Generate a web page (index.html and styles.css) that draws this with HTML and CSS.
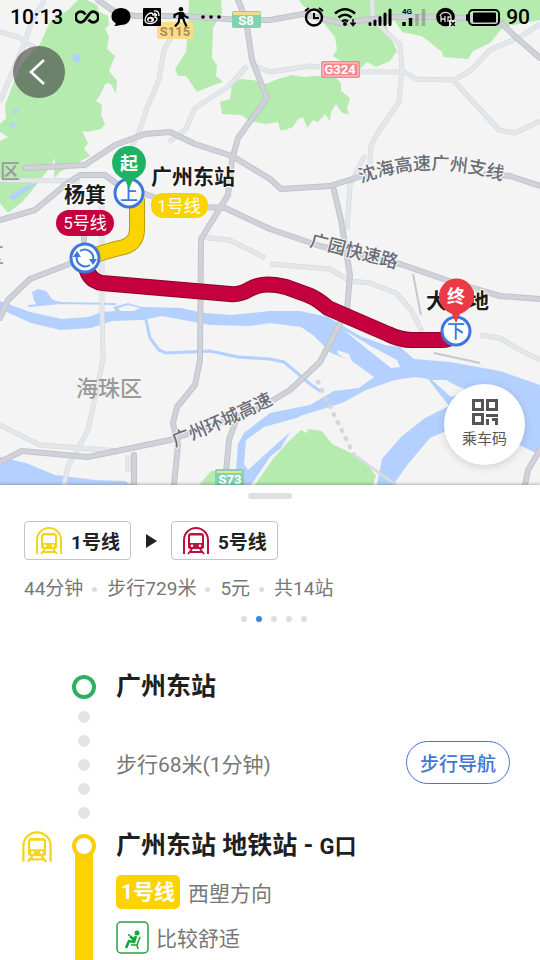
FILE: index.html
```html
<!DOCTYPE html>
<html lang="zh-CN">
<head>
<meta charset="utf-8">
<meta name="viewport" content="width=device-width, initial-scale=1">
<title>公交路线详情</title>
<link rel="stylesheet" href="styles.css">
</head>
<body>
<svg class="defs" width="0" height="0" aria-hidden="true">
  <symbol id="metro" viewBox="0 0 30 30">
    <path d="M3 28V14a12 12 0 0 1 24 0v14" fill="none" stroke="currentColor" stroke-width="2"/>
    <path fill="currentColor" fill-rule="evenodd" d="M10 7h10a3 3 0 0 1 3 3V21a2 2 0 0 1-2 2H9a2 2 0 0 1-2-2V10a3 3 0 0 1 3-3zM9 10.500V17h12v-6.500a1 1 0 0 0-1-1H10a1 1 0 0 0-1 1zM11 18.500a1.300 1.300 0 1 0 0 2.600 1.300 1.300 0 0 0 0-2.600zM19 18.500a1.300 1.300 0 1 0 0 2.600 1.300 1.300 0 0 0 0-2.600z"/>
    <path d="M11 23l-4 5M19 23l4 5M9 26h12" fill="none" stroke="currentColor" stroke-width="2"/>
  </symbol>
</svg>

<main class="page">
  <section class="map" aria-label="路线地图">
    <svg class="map-canvas" viewBox="0 0 540 485">
      <rect width="540" height="485" fill="#f4f4f5"/>
      <g fill="#b5ebaf">
        <path d="M78 0H87L97 5 99 12 108 16 109 25 105 29 109 37 107 49 115 56 109 71 117 81 116 94 111 84 106 83 100 95 96 101 102 105 101 115 105 124 101 129 87 132 82 131 88 143 84 149 90 156 72 166 60 172 54 178 55 158 48 170 29 194 22 202 8 213 0 203V141L8 137 0 132V124L6 118 5 105 20 66 40 44 50 22 68 10Z"/>
        <path d="M189 0H221L222 13 213 28 212 58 217 65 216 76 223 82 211 86 197 92 186 76 178 76 175 69 186 52 188 28Z"/>
        <path d="M232 84 241 79 253 80 266 84 278 79 292 75 304 77 315 76 335 77 341 83 341 91 350 98 347 109 349 114 342 113 336 104 331 112 330 121 325 114 318 122 313 120 307 128 303 117 298 119 293 127 285 130 280 130 278 122 266 124 250 121 241 115 222 114 220 102 230 99Z"/>
        <path d="M299 0H540V20L503 27 490 43 473 51 468 59 443 57 442 52 427 40 421 36 402 32 394 20 386 25 391 38 397 51 390 61 376 67 367 62 360 69 346 64 333 56 337 50 335 37 326 26 315 9 304 7Z"/>
        <path d="M199 485 211 471 228 470 236 480 241 485ZM255 485 272 460 288 442 301 430 306 433 308 429 322 431 332 444 349 452 367 464 376 476 373 485Z"/>
      </g>
      <g fill="#b4d0ff">
        <path d="M72 55l8-2v8l-6 2zM11 112l8-5-3 7zM10 122l9 4-8 1zM8 197l16-10 14-4-14 10-10 7zM32 292l6-3 8 2 7 9 12 3-27 3-4-5z"/>
        <path d="M0 301 30 312 62 319 88 317 102 312 116 311 113 307 128 303 142 307 181 308 204 313 231 315 270 311 300 311 328 317 360 336 385 345 400 347 414 359 450 362 500 371 540 385V455L505 438 462 424 430 438 408 464 393 485H377L382 459 401 437 425 418 449 406 446 402 428 379 415 377 395 380 366 390 342 403 300 416 293 427 281 448 270 457 251 485H243L236 470 238 444 244 433 270 413 310 405 334 391 359 388 374 377 352 361 331 353 313 335 301 327 270 323 250 326 210 325 162 316 142 320 112 321 91 328 60 330 31 323 0 309Z"/>
        <path d="M0 457 26 463 55 475 95 480 125 481 132 485H0Z"/>
        <path fill="#f4f4f5" d="M344 330 362 345 391 368 400 367 397 360 369 345ZM432 380 446 380 457 386 470 391 451 397ZM337 350 349 354 352 362 338 354ZM246 440 264 427 300 417 290 432 270 450 248 470 244 464ZM118 308 128 305 140 308 134 311 120 311Z"/>
      </g>
      <g fill="none" stroke="#b4d0ff" stroke-linecap="round">
        <path d="M29 306 60 303 115 304" stroke-width="2"/>
        <path d="M146 320 150 338 159 350 166 353 210 351 238 357 270 359 284 362 296 372 310 384 320 391" stroke-width="3"/>
      </g>
      <g fill="none" stroke="#d3d7db" stroke-width="5" stroke-linejoin="round">
        <path d="M45 0 32 20 24 45 14 68 0 102M0 32 18 37 35 48M175 30 164 50 159 80 147 108 138 135 130 150M247 66 229 86 195 108 186 129 169 142M252 65 270 72M270 72 310 66 320 67M345 72 380 72 405 72 416 79 454 80 470 71 490 50 520 37 540 24M372 0 373 18 386 32 400 45 402 70 399 102 379 131 371 145 370 164M455 82 499 130 515 133 540 121M102 195V310L103 360 88 430 68 466 64 485M0 425 40 445 120 451M0 180 80 181M200 237 229 240 250 250 265 258M128 455V472M480 335 500 338 520 350 540 360M270 264 330 269 350 281 370 283 396 293 411 310 422 331M365 155 350 185 347 230"/>
      </g>
      <g fill="none" stroke="#e3e7e9" stroke-width="4" stroke-linejoin="round">
        <path d="M45 0 32 20 24 45 14 68 0 102M0 32 18 37 35 48M175 30 164 50 159 80 147 108 138 135 130 150M247 66 229 86 195 108 186 129 169 142M252 65 270 72M270 72 310 66 320 67M345 72 380 72 405 72 416 79 454 80 470 71 490 50 520 37 540 24M372 0 373 18 386 32 400 45 402 70 399 102 379 131 371 145 370 164M455 82 499 130 515 133 540 121M102 195V310L103 360 88 430 68 466 64 485M0 425 40 445 120 451M0 180 80 181M200 237 229 240 250 250 265 258M128 455V472M480 335 500 338 520 350 540 360M270 264 330 269 350 281 370 283 396 293 411 310 422 331M365 155 350 185 347 230"/>
      </g>
      <g fill="none" stroke="#c2c4cb" stroke-width="6" stroke-linejoin="round" stroke-linecap="round">
        <path d="M98 0 115 12 135 16 185 16 240 20 270 20 303 14 340 23 390 17 450 17 500 22 518 39 540 58M238 0 246 20 252 60 267 98 238 138 232 160 228 195 201 239 200 360 195 385 177 407 173 423 178 445 174 485M25 168 85 165 115 145 145 134 170 132 195 144 232 156 270 179 281 189 330 186 365 175M0 220 35 210 65 185 80 175 105 175 125 190 145 194 180 206 225 208 270 229 320 246 400 264 455 283 500 296 540 299M334 190 341 220 350 275 347 310 320 362 290 390 255 411 170 440 88 457 22 451 0 462M486 174 510 176 540 186M84 215V240M85 258 30 279 8 300 0 318M134 455V485M236 420 229 440 226 472M540 450 528 470 525 485"/>
      </g>
      <g fill="none" stroke="#d0d1d9" stroke-width="4" stroke-linejoin="round" stroke-linecap="round">
        <path d="M98 0 115 12 135 16 185 16 240 20 270 20 303 14 340 23 390 17 450 17 500 22 518 39 540 58M238 0 246 20 252 60 267 98 238 138 232 160 228 195 201 239 200 360 195 385 177 407 173 423 178 445 174 485M25 168 85 165 115 145 145 134 170 132 195 144 232 156 270 179 281 189 330 186 365 175M0 220 35 210 65 185 80 175 105 175 125 190 145 194 180 206 225 208 270 229 320 246 400 264 455 283 500 296 540 299M334 190 341 220 350 275 347 310 320 362 290 390 255 411 170 440 88 457 22 451 0 462M486 174 510 176 540 186M84 215V240M85 258 30 279 8 300 0 318M134 455V485M236 420 229 440 226 472M540 450 528 470 525 485"/>
      </g>
      <path d="M317 380 354 455" fill="none" stroke="#d4d7da" stroke-width="4" stroke-dasharray="5 4"/>
      <path d="M354 455 396 485" fill="none" stroke="#d9dcde" stroke-width="3"/>
      <path d="M413 274 421 315M434 353 480 363" fill="none" stroke="#c6c8cf" stroke-width="2"/>

      <g class="shield">
        <rect x="157" y="22" width="36" height="17" rx="2" fill="#fbdc8b"/><text x="175" y="36" fill="#a98c50">S115</text>
        <rect x="232" y="11" width="29" height="17" rx="2" fill="#7fd3b1"/><path d="M233 12h27v3h-27z" fill="#f2dc8c"/><text x="246" y="25" fill="#fff">S8</text>
        <rect x="321" y="61" width="39" height="17" rx="2" fill="#f5868c"/><rect x="323" y="63" width="35" height="13" rx="1" fill="none" stroke="#ffd5d7"/><text x="340" y="74" fill="#fff">G324</text>
        <rect x="215" y="469" width="29" height="18" rx="2" fill="#7fd3b1"/><path d="M217 471h25v2h-25z" fill="#f2dc8c"/><text x="230" y="484" fill="#fff">S73</text>
      </g>

      <defs>
        <path id="road-north" d="M361 183Q425 158 500 180"/>
        <path id="road-garden" d="M309 246 402 270"/>
        <path id="road-ring" d="M175 447Q220 430 275 403"/>
      </defs>
      <g class="road-name">
        <text><textPath href="#road-north">沈海高速广州支线</textPath></text>
        <text><textPath href="#road-garden">广园快速路</textPath></text>
        <text><textPath href="#road-ring">广州环城高速</textPath></text>
      </g>
      <g class="district"><text x="76" y="396">海珠区</text><text class="small" x="0" y="179">区</text><text class="small" x="-16" y="263">区</text></g>

      <g fill="none" stroke-linejoin="round">
        <path d="M137 198V229Q137 243 124 247 110 250 86 258" stroke="#b99b14" stroke-width="16"/>
        <path d="M137 198V229Q137 243 124 247 110 250 86 258" stroke="#fbd400" stroke-width="14"/>
        <path d="M85 260Q86 280 102 283L230 294Q240 295 250 289 264 281 286 287L308 295Q318 299 328 308L388 334Q400 340 412 340H440Q450 340 456 335" stroke="#8d002c" stroke-width="16"/>
        <path d="M85 260Q86 280 102 283L230 294Q240 295 250 289 264 281 286 287L308 295Q318 299 328 308L388 334Q400 340 412 340H440Q450 340 456 335" stroke="#c4003f" stroke-width="14"/>
      </g>
      <rect x="151" y="193" width="57" height="25" rx="12" fill="#fbd400"/>
      <rect x="56" y="210" width="58" height="26" rx="13" fill="#c4003f"/>
      <g class="line-tag"><text x="179" y="212">1号线</text><text x="85" y="229">5号线</text></g>
      <g class="station-name"><text x="151" y="184">广州东站</text><text x="64" y="202">杨箕</text><text x="426" y="308">大</text><text x="468" y="308">地</text></g>
      <g fill="#fff" stroke="#3d78df" stroke-width="3">
        <circle cx="129" cy="193" r="14"/><circle cx="85" cy="258" r="14"/><circle cx="456" cy="331" r="14"/>
      </g>
      <g class="stop-mark"><text x="129" y="200">上</text><text x="456" y="338">下</text></g>
      <path d="M80 251A8.500 8.500 0 0 1 93 260M90 265A8.500 8.500 0 0 1 77 256" fill="none" stroke="#3d78df" stroke-width="2"/>
      <path d="M89 259h8l-4 6zM81 257h-8l4-6z" fill="#3d78df"/>
      <path d="M129 189L125 180Q112 174 112 163A17 17 0 0 1 146 163Q146 174 133 180Z" fill="#1eb263"/>
      <path d="M456 323L452 314Q439 308 439 296A17.500 17.500 0 0 1 474 296Q474 308 460 314Z" fill="#e93a45"/>
      <g class="pin-mark"><text x="129" y="170">起</text><text x="456" y="303">终</text></g>
    </svg>

    <div class="status">
      <div class="status-group">
        <span class="clock">10:13</span>
        <svg width="24" height="20" viewBox="0 0 24 20"><path d="M10.500 7.500C9 5.500 7.500 4.700 6 4.700a5 5 0 0 0 0 10.600c2.500 0 4-2 6-5s3.500-5.600 6-5.600a5 5 0 0 1 0 10.600c-1.700 0-3-.8-4.500-2.600" fill="none" stroke="#000" stroke-width="2.800"/></svg>
        <svg width="20" height="20" viewBox="0 0 20 20"><path d="M10 1c5.500 0 9.500 3.500 9.500 8.500S15.500 18 10 18q-4 1-7 1 2-1 1.500-3Q.5 14 .5 9.500C.5 4.500 4.500 1 10 1z"/></svg>
        <svg width="18" height="20" viewBox="0 0 18 20"><rect y="1" width="18" height="18" rx="1"/><path d="M8 6C5 6 2 10 2 13c0 2 2 3.500 5.500 3.500S14 14 14 12q0-1.500-2-2 1-3-2-2Q10 6 8 6zM11 4q5-1 5 5M11 6.500q3 0 2.500 2.500" fill="none" stroke="#fff" stroke-width="1.300"/><ellipse cx="7.500" cy="12.500" rx="3.500" ry="2.700" fill="#fff"/><circle cx="7" cy="13" r="1.500"/></svg>
        <svg width="16" height="20" viewBox="0 0 16 20"><circle cx="8" cy="2.300" r="2.300"/><path d="M5.500 5h5l.5 7h-5.500z"/><path d="M1.500 11V8L6 6M10 6l1.500 3 4 2M10 11l1.500 4 2 4.500M6.500 11L5.500 15.500 2 19.500" fill="none" stroke="#000" stroke-width="2.200"/></svg>
        <svg width="20" height="20" viewBox="0 0 20 20"><circle cx="2" cy="10" r="1.800"/><circle cx="10" cy="10" r="1.800"/><circle cx="18" cy="10" r="1.800"/></svg>
      </div>
      <div class="status-group right">
        <svg width="20" height="20" viewBox="0 0 20 20"><circle cx="10" cy="10.500" r="8" fill="none" stroke="#000" stroke-width="2.400"/><path d="M10 6v5h5M1 4l4-3M15 1l4 3" fill="none" stroke="#000" stroke-width="2"/></svg>
        <svg width="24" height="20" viewBox="0 0 24 20"><path d="M1 6.500Q11 -2 21 6.500M4.500 10.500Q11 5 17.500 10.500M8 14.500Q11 12 14 14.500" fill="none" stroke="#000" stroke-width="2.600"/><circle cx="11" cy="17" r="2"/><path d="M19 12v6M16.500 15.500L19 18.500l2.500-3" fill="none" stroke="#000" stroke-width="1.500"/></svg>
        <svg width="24" height="20" viewBox="0 0 24 20"><path d="M2 16.500v1M7 14v3.500M12 10.500v7M17 7v10.500M22 3v14.500" stroke="#000" stroke-width="3" stroke-linecap="round"/></svg>
        <svg width="24" height="20" viewBox="0 0 24 20"><path d="M2 15v4M8.500 11v8" stroke="#000" stroke-width="3.500"/><path d="M15 7v12M21.500 2v17" stroke="#777" stroke-opacity=".5" stroke-width="3.500"/><text x="0" y="7" class="net">4G</text></svg>
        <svg width="20" height="20" viewBox="0 0 20 20"><circle cx="9.500" cy="10" r="9.300"/><path d="M4 9a6 6 0 0 1 11 0M5 9v6M9 9v6M5 12h4M12 15V10h3v3" fill="none" stroke="#ddd" stroke-width="1.300"/><path d="M13 13h7v7h-7z" fill="#e3e3e5"/><path d="M15 15l4 4M19 15l-4 4" stroke="#000" stroke-width="1.500"/></svg>
        <svg width="34" height="20" viewBox="0 0 34 20"><rect x="3" y="3" width="30" height="15" rx="4" fill="none" stroke="#000" stroke-width="2"/><rect x="7" y="5.500" width="23" height="10" rx="1"/><path d="M0 8q0-1 2-1v7q-2 0-2-1z"/></svg>
        <span class="clock">90</span>
      </div>
    </div>

    <button class="back" type="button" aria-label="返回"><svg width="52" height="52" viewBox="0 0 52 52"><path d="M31 14L18 26l13 12" fill="none" stroke="#fff" stroke-width="2.600"/></svg></button>
    <button class="qr" type="button">
      <svg width="26" height="26" viewBox="0 0 26 26" fill="none" stroke="#555" stroke-width="3"><path d="M1.500 1.500h9v9h-9zM15.500 1.500h9v9h-9zM1.500 15.500h9v9h-9z"/><path d="M14 16.500h12M15.500 20v6M20 20.500h6M24.500 19v7"/></svg>
      <span>乘车码</span>
    </button>
  </section>

  <section class="sheet">
    <div class="handle"></div>
    <div class="lines">
      <button class="chip" type="button"><svg class="yellow" width="30" height="30"><use href="#metro"/></svg>1号线</button>
      <svg class="arrow" width="12" height="14" viewBox="0 0 12 14"><path d="M1 0l11 7-11 7z" fill="#222"/></svg>
      <button class="chip" type="button"><svg class="red" width="30" height="30"><use href="#metro"/></svg>5号线</button>
    </div>
    <ul class="facts"><li>44分钟</li><li>步行729米</li><li>5元</li><li>共14站</li></ul>
    <div class="pager"><i></i><i class="on"></i><i></i><i></i><i></i></div>

    <ol class="steps">
      <li class="step">
        <div class="rail"><b class="ring green"></b><i></i><i></i><i></i><i></i><i></i></div>
        <div class="body">
          <h2>广州东站</h2>
          <div class="walk"><span>步行68米(1分钟)</span><button class="nav" type="button">步行导航</button></div>
        </div>
      </li>
      <li class="step last">
        <svg class="mode yellow" width="34" height="34"><use href="#metro"/></svg>
        <div class="rail"><b class="ring gold"></b><div class="bar"></div></div>
        <div class="body">
          <h2>广州东站 地铁站 - <small>G口</small></h2>
          <p class="info"><strong class="tag">1号线</strong>西塱方向</p>
          <p class="info comfort"><svg width="33" height="33" viewBox="0 0 33 33"><rect x="1" y="1" width="31" height="31" rx="4" fill="#fff" stroke="#24a148" stroke-width="1.500"/><circle cx="21" cy="12" r="2.500" fill="#10a936"/><path d="M20 15l-2 6-5-1-3 7M14 15l3 3 3-2" fill="none" stroke="#10a936" stroke-width="2.600" stroke-linejoin="round"/><path d="M24 16l-3 8h-6M21 24l1 4M13 13v2" fill="none" stroke="#10a936" stroke-width="1.500"/></svg>比较舒适</p>
        </div>
      </li>
    </ol>
  </section>
</main>
</body>
</html>
```

FILE: styles.css
```css
* { box-sizing: border-box; }

body {
  margin: 0;
  background: #fff;
  color: #222;
  font-family: Roboto, "Noto Sans CJK SC", sans-serif;
}

button {
  margin: 0;
  padding: 0;
  border: 0;
  background: none;
  font: inherit;
  color: inherit;
  cursor: pointer;
}

h2, p, ul, ol { margin: 0; padding: 0; list-style: none; }

.defs { position: absolute; }
.yellow { color: #f3d51c; }
.red { color: #c0103f; }

.page {
  display: flex;
  flex-direction: column;
  min-height: 100vh;
}

/* Map */
.map { position: relative; overflow: hidden; }
.map-canvas { display: block; width: 100%; height: auto; }

.shield { font-size: 13px; font-weight: 700; text-anchor: middle; }
.road-name {
  font-size: 18px;
  font-weight: 500;
  fill: #6a6c74;
  stroke: #f4f4f5;
  stroke-width: 2px;
  paint-order: stroke;
}
.district { font-size: 22px; font-weight: 500; fill: #9a9a9c; }
.district .small { font-size: 20px; }
.station-name {
  font-size: 21px;
  font-weight: 700;
  fill: #1c1c1e;
  stroke: #fff;
  stroke-width: 2px;
  paint-order: stroke;
}
.line-tag { font-size: 17px; fill: #fff; text-anchor: middle; }
.stop-mark { font-size: 18px; font-weight: 500; fill: #3d78df; text-anchor: middle; }
.pin-mark { font-size: 18px; font-weight: 700; fill: #fff; text-anchor: middle; }

.status {
  position: absolute;
  top: 0;
  left: 0;
  right: 0;
  display: flex;
  justify-content: space-between;
  padding: 4px 10px;
}
.status-group { display: flex; align-items: center; gap: 12px; height: 26px; }
.status-group.right { gap: 10px; }
.clock { font-size: 21px; font-weight: 500; line-height: 26px; color: #000; }
.right .clock { margin-left: -4px; }
.net { font-size: 8px; font-weight: 700; }

.back {
  position: absolute;
  top: 46px;
  left: 13px;
  width: 52px;
  height: 52px;
  border-radius: 50%;
  background: rgba(60, 60, 60, 0.6);
}
.back svg { display: block; }

.qr {
  position: absolute;
  right: 15px;
  bottom: 20px;
  display: flex;
  flex-direction: column;
  align-items: center;
  justify-content: center;
  gap: 4px;
  width: 81px;
  height: 81px;
  border-radius: 50%;
  background: #fff;
  box-shadow: 0 2px 8px rgba(0, 0, 0, 0.15);
  font-size: 15px;
  line-height: 20px;
  color: #555;
}
.qr svg { margin-top: -2px; }

/* Sheet */
.sheet {
  flex: 1;
  display: flex;
  flex-direction: column;
  padding-top: 8px;
  background: #fff;
  box-shadow: 0 -1px 3px rgba(0, 0, 0, 0.25);
  position: relative;
}
.handle {
  align-self: center;
  width: 44px;
  height: 6px;
  border-radius: 3px;
  background: #dfe1e1;
}

.lines { display: flex; align-items: center; gap: 14px; padding: 22px 24px 0; }
.chip {
  display: flex;
  align-items: center;
  gap: 7px;
  height: 39px;
  padding: 0 10px 0 9px;
  border: 1px solid #c4c4c4;
  border-radius: 4px;
  font-size: 19px;
  font-weight: 700;
}

.facts {
  display: flex;
  padding: 15px 24px 0;
  font-size: 19px;
  line-height: 28px;
  color: #777;
}
.facts li { display: flex; align-items: center; }
.facts li + li::before {
  content: "";
  width: 5px;
  height: 5px;
  margin: 0 10px 0 9px;
  border-radius: 50%;
  background: #ddd;
}

.pager { display: flex; justify-content: center; gap: 9px; padding: 13px 0 0 8px; }
.pager i { width: 6px; height: 6px; border-radius: 50%; background: #ddd; }
.pager .on { background: #4382e0; }

.steps { flex: 1; display: flex; flex-direction: column; padding: 53px 30px 0 20px; }
.step {
  display: grid;
  grid-template-columns: 32px 24px 1fr;
  column-gap: 20px;
  padding-bottom: 15px;
}
.step.last { flex: 1; padding-bottom: 0; }
.mode { grid-column: 1; margin-top: -4px; }
.rail { grid-column: 2; display: flex; flex-direction: column; align-items: center; gap: 12px; }
.rail i { width: 12px; height: 12px; border-radius: 50%; background: #e3e3e3; }
.ring { width: 24px; height: 24px; border-radius: 50%; background: #fff; }
.green { border: 4px solid #2fb061; }
.gold { position: relative; border: 4px solid #f8ce0c; }
.bar { flex: 1; width: 18px; margin-top: -16px; background: #fbd400; }

.body { grid-column: 3; min-width: 0; }
h2 { font-size: 25px; font-weight: 700; line-height: 24px; color: #1f1f1f; }
h2 small { font-size: 22px; }
.walk {
  display: flex;
  align-items: center;
  justify-content: space-between;
  margin-top: 42px;
  font-size: 21px;
  color: #777;
}
.nav {
  height: 43px;
  padding: 0 13px;
  border: 1px solid #3f76d6;
  border-radius: 22px;
  font-size: 19px;
  font-weight: 500;
  color: #3f76d6;
}
.info {
  display: flex;
  align-items: center;
  gap: 8px;
  height: 34px;
  margin-top: 16px;
  font-size: 21px;
  color: #777;
}
.info.comfort { gap: 7px; margin-top: 11px; }
.tag {
  padding: 0 5px;
  border-radius: 5px;
  background: #fbd400;
  color: #fff;
  font-size: 21px;
  font-weight: 700;
  line-height: 34px;
}
```
